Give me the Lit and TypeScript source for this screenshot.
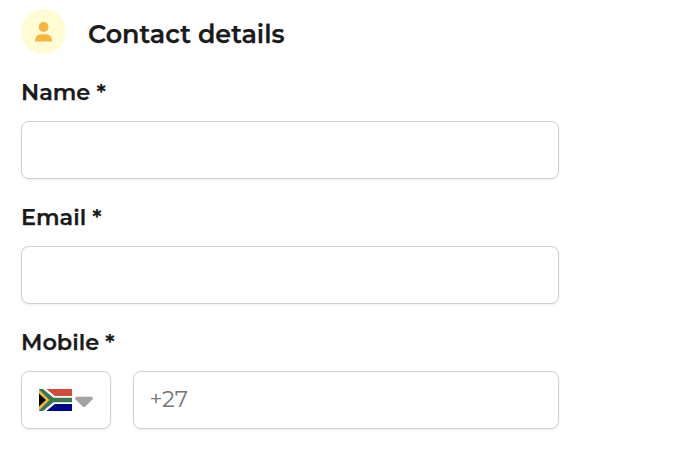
import { LitElement, html, svg, css } from "lit";
import { customElement } from "lit/decorators.js";

const personIcon = svg`
  <svg class="person" viewBox="0 0 18 20" aria-hidden="true">
    <circle cx="8.6" cy="5" r="4.9" />
    <path d="M0.1 19.6v-1C0.1 15 2.8 12.2 6.4 12.2h4.3c3.6 0 6.3 2.8 6.3 6.4v1z" />
  </svg>`;

const flagIcon = svg`
  <svg class="flag" viewBox="0 0 33 22" aria-label="South Africa">
    <rect width="33" height="22" fill="#fff" />
    <path d="M7.3 0H33v7.1H15.8z" fill="#d54a3a" />
    <path d="M7.3 22H33v-7.1H15.8z" fill="#00078b" />
    <path d="M0 0H4L14.6 8.8H33V13.2H14.6L4 22H0z" fill="#39774c" />
    <path d="M0 0.6L10.2 11L0 21.4z" fill="#f3b648" />
    <path d="M0 4.4L6.9 11L0 17.6z" fill="#000" />
  </svg>`;

@customElement("app-root")
export class AppRoot extends LitElement {
  static styles = css`
    :host {
      display: block;
      height: 450px;
      box-sizing: border-box;
      padding: 9px 0 0 21px;
      background: #fff;
      color: #1a1a1a;
      font-family: Montserrat, Inter, "Liberation Sans", sans-serif;
      overflow: hidden;
    }
    * { box-sizing: border-box; }
    header { display: flex; height: 45px; gap: 22px; }
    .badge {
      width: 45px; height: 45px; border-radius: 50%;
      background: #fefbd5;
      display: flex; justify-content: center; padding-top: 13px;
    }
    .person { width: 18px; height: 20px; fill: #f6b63e; display: block; }
    h1 { margin: 10px 0 0; font-size: 25.4px; line-height: 30px; font-weight: 600; white-space: nowrap; -webkit-text-stroke: 0.25px #1a1a1a; }
    .fields { width: 538px; padding-top: 24px; }
    .field { height: 125px; }
    label { display: block; font-size: 22.4px; line-height: 28px; height: 28px; font-weight: 600; white-space: nowrap; -webkit-text-stroke: 0.25px #1a1a1a; }
    .row { display: flex; gap: 22px; margin-top: 15px; }
    .box {
      height: 58px; flex: 1; min-width: 0;
      border: 1px solid #d1d1d1; border-radius: 8px;
      background: #fff; box-shadow: 0 1px 3px rgba(0, 0, 0, 0.08);
      font: 400 22.4px/54px Montserrat, Inter, "Liberation Sans", sans-serif;
      padding: 0 16px 2px 15.5px; outline: none; color: #1a1a1a;
    }
    .box::placeholder { color: #757575; opacity: 1; }
    .country { flex: 0 0 90px; display: flex; align-items: center; padding: 0 0 0 17px; gap: 3px; }
    .flag { width: 33px; height: 22px; flex: none; }
    .caret { width: 18px; height: 12px; margin-top: 3px; fill: #a3a3a3; flex: none; }
  `;

  private label(text: string, key: string) {
    return html`<label for=${key}>${text} *</label>`;
  }

  render() {
    return html`
      <header>
        <div class="badge">${personIcon}</div>
        <h1>Contact details</h1>
      </header>
      <div class="fields">
        <div class="field">${this.label("Name", "name")}
          <div class="row"><input class="box" id="name" /></div>
        </div>
        <div class="field">${this.label("Email", "email")}
          <div class="row"><input class="box" id="email" /></div>
        </div>
        <div class="field">${this.label("Mobile", "mobile")}
          <div class="row">
            <button class="box country" aria-label="Country">
              ${flagIcon}
              <svg class="caret" viewBox="0 0 18 12"><path d="M1.4 0.8H16.6Q18 .8 17.9 2.4Q17.9 3.2 17.2 3.8L10.4 10.6Q9 11.8 7.6 10.6L.8 3.8Q.1 3.2.1 2.4Q0 .8 1.4 .8z" /></svg>
            </button>
            <input class="box" id="mobile" placeholder="+27" />
          </div>
        </div>
      </div>`;
  }
}
